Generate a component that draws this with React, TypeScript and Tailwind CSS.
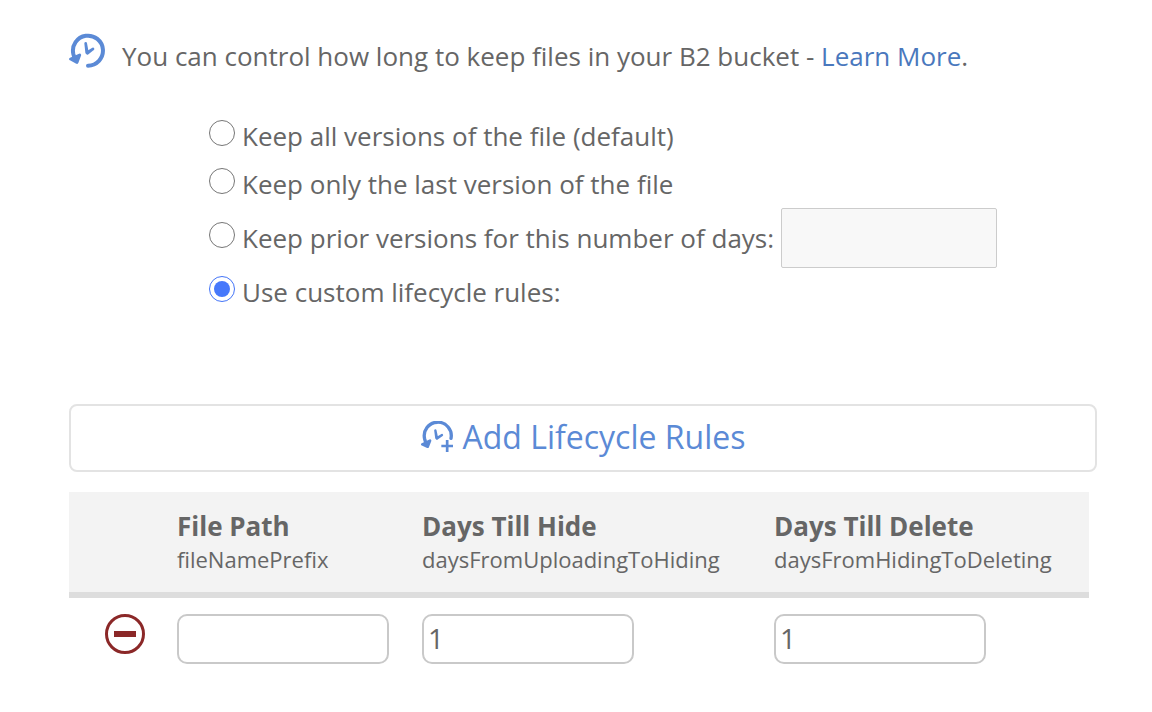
import { useState } from "react";

const retentionOptions = [
  { id: "keep-all", label: "Keep all versions of the file (default)" },
  { id: "keep-last", label: "Keep only the last version of the file" },
  { id: "keep-days", label: "Keep prior versions for this number of days:" },
  { id: "custom", label: "Use custom lifecycle rules:" },
];

function HistoryIcon() {
  return (
    <svg viewBox="27 26 108 105" className="h-[35px] w-9 shrink-0" fill="none" aria-hidden="true">
      <path
        d="M84 124A45 45 0 1 0 40 89L44 103"
        stroke="#5b8ad6"
        strokeWidth="12"
        strokeLinecap="round"
      />
      <path d="M32 104L59 92L51 114Z" fill="#5b8ad6" stroke="#5b8ad6" strokeWidth="9" strokeLinejoin="round" />
      <path
        d="M77 57L82 84L99 74L82 87L80 85Z"
        fill="#5b8ad6"
        stroke="#5b8ad6"
        strokeWidth="8"
        strokeLinejoin="round"
      />
    </svg>
  );
}

function HistoryAddIcon() {
  return (
    <svg viewBox="31 28 99 96" className="h-8 w-[33px] shrink-0" fill="none" aria-hidden="true">
      <path
        d="M121 80A40.500 40.500 0 1 0 42 82L46 96"
        stroke="#5b8ad6"
        strokeWidth="10"
        strokeLinecap="round"
      />
      <path d="M35 98L58 87L51 105Z" fill="#5b8ad6" stroke="#5b8ad6" strokeWidth="8" strokeLinejoin="round" />
      <path
        d="M74 56L79 79L94 70L79 81L77 79Z"
        fill="#5b8ad6"
        stroke="#5b8ad6"
        strokeWidth="7"
        strokeLinejoin="round"
      />
      <path d="M109.500 85V121M92 103H127" stroke="#5b8ad6" strokeWidth="8" />
    </svg>
  );
}

function RemoveIcon() {
  return (
    <svg viewBox="0 0 40 40" className="size-10" fill="none" aria-hidden="true">
      <circle cx="20" cy="20" r="18.500" stroke="#8b2828" strokeWidth="3" />
      <path d="M9 20H31" stroke="#8b2828" strokeWidth="6" />
    </svg>
  );
}

const ruleInput =
  "block h-[50px] w-[212px] rounded-[10px] border-2 border-[#c9c9c9] bg-white px-1 pb-0.5 text-[28px] outline-none focus:border-[#5b8ad6]";

export default function App() {
  const [selected, setSelected] = useState("custom");

  return (
    <main className="bg-white pt-[33px] pr-[55px] pb-12 pl-[69px] font-['Open_Sans','Noto_Sans',sans-serif] text-[26px] leading-9 text-[#666666]">
      <div className="flex items-start gap-[17px]">
        <HistoryIcon />
        <p className="pt-[5px]">
          You can control how long to keep files in your B2 bucket -{" "}
          <a href="#learn-more" className="text-[#4a78bd]">
            Learn More
          </a>
          .
        </p>
      </div>

      <div role="radiogroup" aria-label="File retention" className="mt-[38px] pl-[140px]">
        {retentionOptions.map((option) => (
          <div key={option.id} className="flex min-h-12 items-center gap-[7px]">
            <input
              type="radio"
              name="retention"
              id={option.id}
              checked={selected === option.id}
              onChange={() => setSelected(option.id)}
              className="mb-1.5 grid size-[26px] shrink-0 appearance-none place-items-center rounded-full border border-[#767676] bg-white before:size-4 before:rounded-full checked:border-[#4374f8] checked:before:bg-[#4678fb]"
            />
            <label htmlFor={option.id}>{option.label}</label>
            {option.id === "keep-days" && (
              <input
                type="text"
                aria-label="Number of days"
                disabled={selected !== "keep-days"}
                className="h-[60px] w-[216px] rounded-xs border border-[#cccccc] bg-[#f8f8f8] px-2 outline-none"
              />
            )}
          </div>
        ))}
      </div>

      <button
        type="button"
        className="mt-[88px] flex h-[68px] w-full items-center justify-center gap-[9px] rounded-lg border-2 border-[#e3e3e3] bg-white pb-0.5 text-[32px] text-[#5b8ad6]"
      >
        <HistoryAddIcon />
        Add Lifecycle Rules
      </button>

      <div className="mt-5 pr-2">
        <table className="w-full table-fixed border-collapse text-left">
          <colgroup>
            <col className="w-[108px]" />
            <col className="w-[245px]" />
            <col className="w-[352px]" />
            <col />
          </colgroup>
          <thead>
            <tr className="h-[100px] bg-[#f3f3f3]">
              <td />
              <th scope="col" className="p-0 pb-0.5">
                <div className="font-bold">File Path</div>
                <div className="text-[22px] leading-[30px] font-normal">fileNamePrefix</div>
              </th>
              <th scope="col" className="p-0 pb-0.5">
                <div className="font-bold">Days Till Hide</div>
                <div className="text-[22px] leading-[30px] font-normal">daysFromUploadingToHiding</div>
              </th>
              <th scope="col" className="p-0 pb-0.5">
                <div className="font-bold">Days Till Delete</div>
                <div className="text-[22px] leading-[30px] font-normal">daysFromHidingToDeleting</div>
              </th>
            </tr>
            <tr className="h-[6px] bg-[#dddddd]">
              <td colSpan={4} className="p-0" />
            </tr>
          </thead>
          <tbody>
            <tr className="align-top">
              <td className="pt-4 pl-9">
                <button type="button" aria-label="Remove rule" className="block">
                  <RemoveIcon />
                </button>
              </td>
              <td className="pt-4">
                <input type="text" aria-label="File Path" className={ruleInput} />
              </td>
              <td className="pt-4">
                <input type="text" aria-label="Days Till Hide" defaultValue="1" className={ruleInput} />
              </td>
              <td className="pt-4">
                <input type="text" aria-label="Days Till Delete" defaultValue="1" className={ruleInput} />
              </td>
            </tr>
          </tbody>
        </table>
      </div>
    </main>
  );
}
